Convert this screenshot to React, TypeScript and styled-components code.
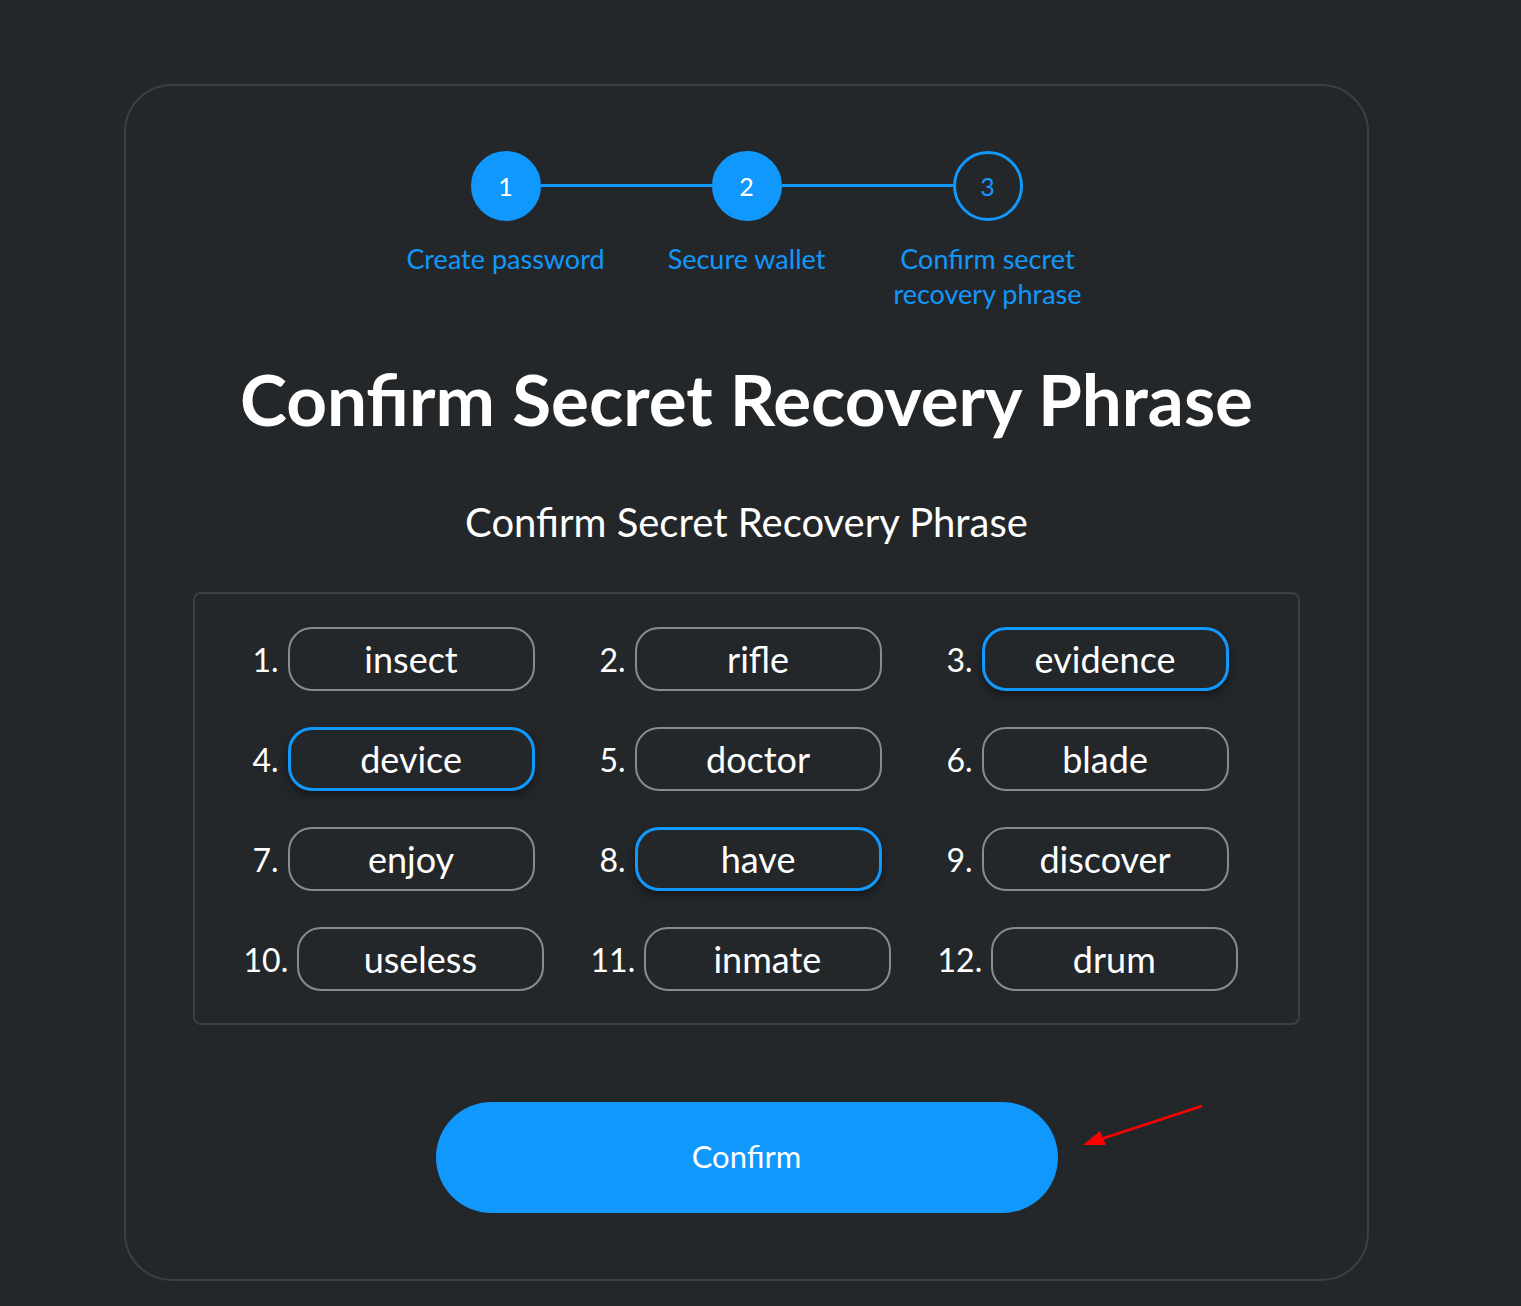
import React from "react";
import styled, { createGlobalStyle } from "styled-components";

const Global = createGlobalStyle`
  html, body { margin: 0; padding: 0; background: #24272a; }
  body { font-family: Lato, "Noto Sans", sans-serif; color: #ffffff; }
`;

const Page = styled.div`
  min-height: 1306px;
  padding: 84px 0 0 124px;
  box-sizing: border-box;
  position: relative;
`;

const Card = styled.div`
  width: 1245px;
  height: 1197px;
  box-sizing: border-box;
  border: 2px solid #3b4046;
  border-radius: 48px;
  padding: 65px 0 0 0;
  display: flex;
  flex-direction: column;
  align-items: center;
`;

const Steps = styled.div`
  display: flex;
  align-items: flex-start;
`;

const Step = styled.div`
  width: 241px;
  display: flex;
  flex-direction: column;
  align-items: center;
  position: relative;
`;

const Connector = styled.div`
  position: absolute;
  top: 33px;
  left: calc(50% + 35px);
  width: 171px;
  height: 3px;
  background: #1098fc;
`;

const Circle = styled.div<{ $filled: boolean }>`
  width: 70px;
  height: 70px;
  box-sizing: border-box;
  border-radius: 50%;
  display: flex;
  align-items: center;
  justify-content: center;
  font-size: 25px;
  background: ${(p) => (p.$filled ? "#1098fc" : "transparent")};
  border: 3px solid #1098fc;
  color: ${(p) => (p.$filled ? "#ffffff" : "#1098fc")};
`;

const StepLabel = styled.div`
  margin-top: 20px;
  color: #1098fc;
  font-size: 27px;
  line-height: 35px;
  text-align: center;
  width: 230px;
`;

const Title = styled.h1`
  margin: 45px 0 0 0;
  font-size: 71px;
  line-height: 86px;
  font-weight: 700;
  color: #ffffff;
`;

const Subtitle = styled.div`
  margin-top: 56px;
  font-size: 40px;
  line-height: 48px;
  color: #ffffff;
`;

const WordBox = styled.div`
  margin-top: 46px;
  width: 1107px;
  height: 433px;
  box-sizing: border-box;
  border: 2px solid #3b4046;
  border-radius: 8px;
  display: grid;
  grid-template-columns: repeat(3, 300px);
  grid-auto-rows: 64px;
  row-gap: 36px;
  column-gap: 47px;
  justify-content: center;
  padding: 33px 12px 0 0;
`;

const Cell = styled.div`
  display: flex;
  align-items: center;
  justify-content: center;
  gap: 9px;
`;

const Num = styled.span`
  font-size: 32px;
  color: #ffffff;
`;

const Chip = styled.div<{ $active: boolean }>`
  width: 247px;
  height: 64px;
  box-sizing: border-box;
  border-radius: 24px;
  border: ${(p) => (p.$active ? "3px solid #1098fc" : "2px solid #848c96")};
  box-shadow: ${(p) => (p.$active ? "0 4px 10px rgba(0,0,0,0.45)" : "none")};
  display: flex;
  align-items: center;
  justify-content: center;
  font-size: 36px;
  color: #ffffff;
`;

const ConfirmButton = styled.button`
  margin-top: 77px;
  width: 622px;
  height: 111px;
  border: none;
  border-radius: 56px;
  background: #1098fc;
  color: #ffffff;
  font-family: inherit;
  font-size: 31px;
  padding-bottom: 4px;
  cursor: pointer;
`;

const Arrow = styled.svg`
  position: absolute;
  left: 1078px;
  top: 1100px;
`;

const steps = [
  { n: "1", label: "Create password", filled: true },
  { n: "2", label: "Secure wallet", filled: true },
  { n: "3", label: "Confirm secret recovery phrase", filled: false },
];

const words = [
  "insect", "rifle", "evidence",
  "device", "doctor", "blade",
  "enjoy", "have", "discover",
  "useless", "inmate", "drum",
];
const active = new Set([2, 3, 7]);

export default function App() {
  return (
    <>
      <Global />
      <Page>
        <Card>
          <Steps>
            {steps.map((s, i) => (
              <Step key={s.n}>
                {i < steps.length - 1 && <Connector />}
                <Circle $filled={s.filled}>{s.n}</Circle>
                <StepLabel>{s.label}</StepLabel>
              </Step>
            ))}
          </Steps>
          <Title>Confirm Secret Recovery Phrase</Title>
          <Subtitle>Confirm Secret Recovery Phrase</Subtitle>
          <WordBox>
            {words.map((w, i) => (
              <Cell key={w}>
                <Num>{i + 1}.</Num>
                <Chip $active={active.has(i)}>{w}</Chip>
              </Cell>
            ))}
          </WordBox>
          <ConfirmButton>Confirm</ConfirmButton>
        </Card>
        <Arrow width="130" height="50" viewBox="0 0 130 50">
          <line x1="124" y1="6" x2="20" y2="40" stroke="#ff0000" strokeWidth="2.5" />
          <polygon points="5,45 22,31 28,45" fill="#ff0000" />
        </Arrow>
      </Page>
    </>
  );
}
